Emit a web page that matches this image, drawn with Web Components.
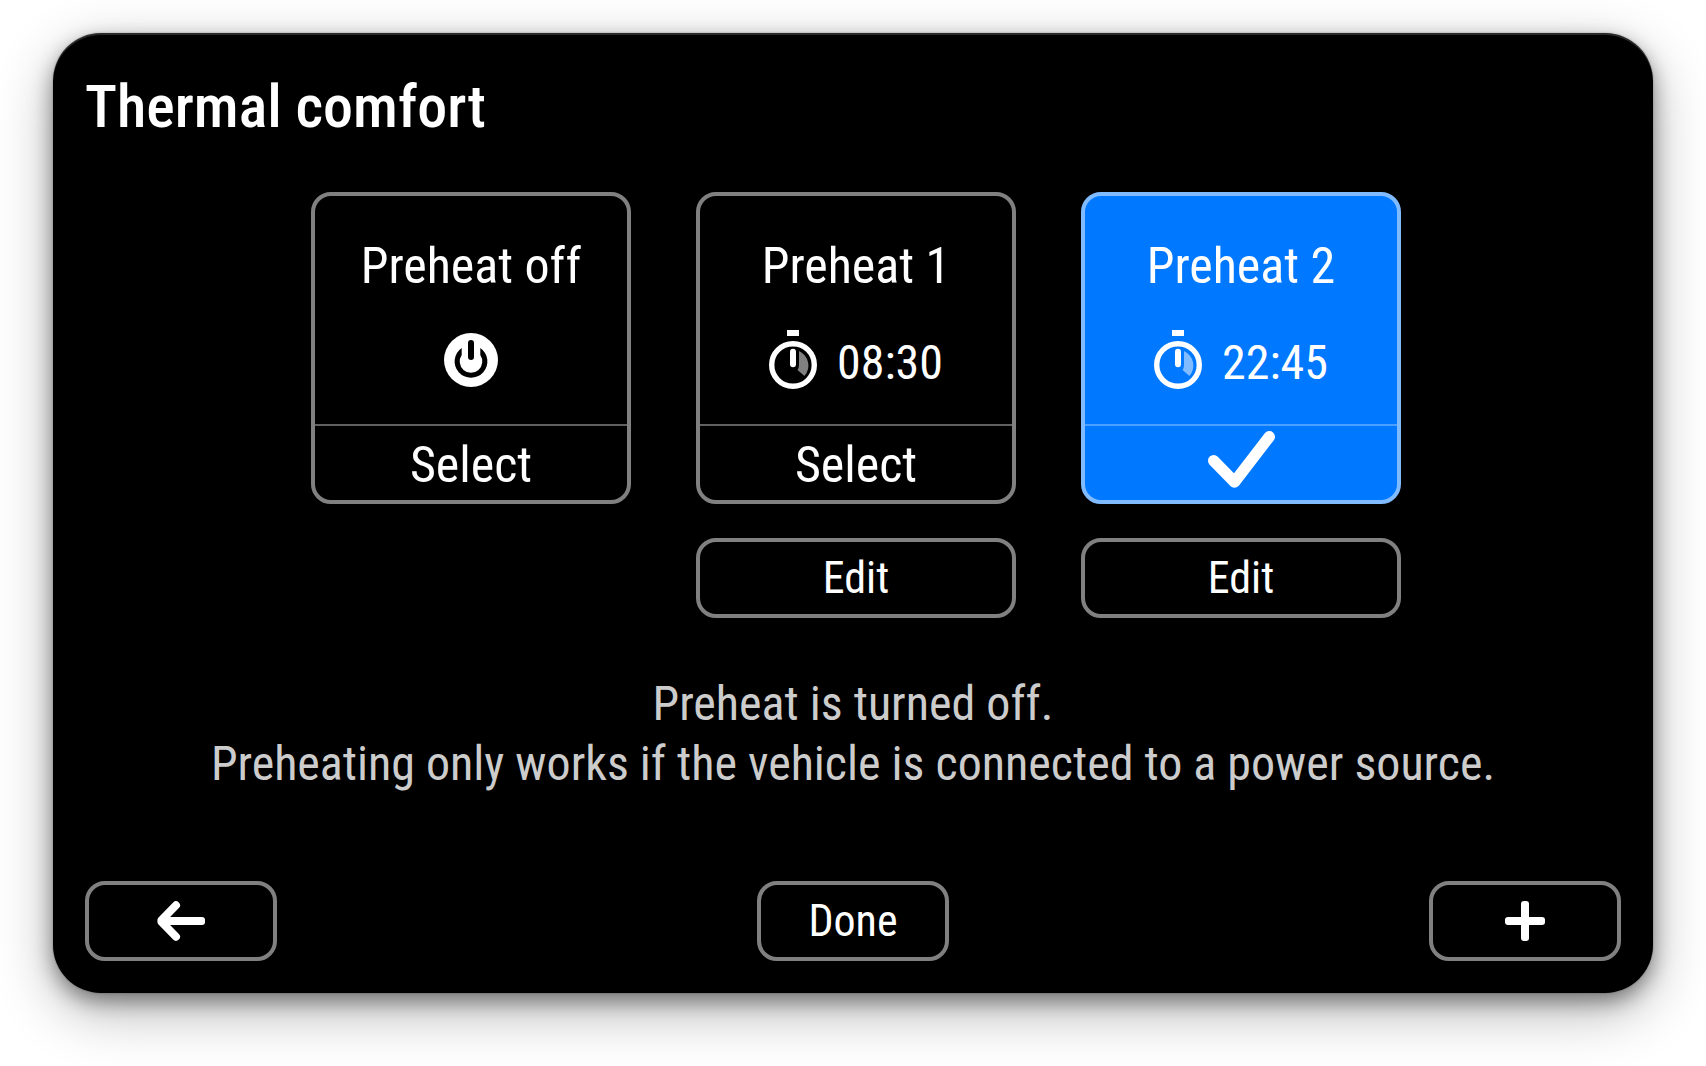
<!DOCTYPE html>
<html lang="en">
<head>
<meta charset="utf-8">
<meta name="viewport" content="width=device-width, initial-scale=1">
<title>Thermal comfort</title>
<style>
  body {
    margin: 0;
    background: #fff;
    font-family: "Roboto Condensed", "Liberation Sans Narrow", "Open Sans", sans-serif;
  }
</style>
</head>
<body>

<thermal-screen>
  <h1 slot="title">Thermal comfort</h1>

  <preheat-option name="Preheat off"></preheat-option>
  <preheat-option name="Preheat 1" time="08:30" editable></preheat-option>
  <preheat-option name="Preheat 2" time="22:45" editable selected></preheat-option>

  <p slot="message">Preheat is turned off.<br>Preheating only works if the vehicle is connected to a power source.</p>

  <panel-button slot="actions" label="Back">
    <svg width="48" height="40" viewBox="0 0 48 40" fill="none" stroke="#fff" stroke-width="8" stroke-linecap="round" stroke-linejoin="round">
      <rect x="6" y="16" width="42" height="8" rx="3" fill="#fff" stroke="none"/>
      <path d="M19 4.3L4.4 19.3V20.7L19 35.7"/>
      <path d="M5 16L12 16V24H5Z" fill="#fff" stroke="none"/>
    </svg>
  </panel-button>
  <panel-button slot="actions">Done</panel-button>
  <panel-button slot="actions" label="Add">
    <svg width="40" height="40" viewBox="0 0 40 40" fill="#fff">
      <rect x="16" width="8" height="40" rx="3"/>
      <rect y="16" width="40" height="8" rx="3"/>
    </svg>
  </panel-button>
</thermal-screen>

<script>
const powerIcon = `
  <svg width="54" height="60" viewBox="0 -3 54 60">
    <circle cx="27" cy="27" r="27" fill="#fff"/>
    <path d="M17.7 14.9A16.4 16.4 0 1 0 36.3 14.9V22A11.3 11.3 0 1 1 17.7 22Z"/>
    <rect x="24" y="7" width="6" height="20" rx="3"/>
  </svg>`;

const timerIcon = `
  <svg width="48" height="60" viewBox="0 0 48 60">
    <rect x="18" width="12" height="6" fill="#fff"/>
    <circle cx="24" cy="35" r="21.3" fill="none" stroke="#fff" stroke-width="5.4"/>
    <path d="M30 21A16 16 0 0 1 35.5 46L28.5 40Q30 38 30 35Z" fill="#fff" opacity=".5"/>
    <rect x="21" y="18.7" width="6" height="18.6" rx="3" fill="#fff"/>
  </svg>`;

const checkIcon = `
  <svg width="68" height="68" viewBox="0 0 68 68" role="img" aria-label="Selected">
    <path d="M6.7 29.7L27.5 51L62.3 5.7" fill="none" stroke="#fff" stroke-width="11.4" stroke-linecap="round" stroke-linejoin="round"/>
  </svg>`;

class PanelButton extends HTMLElement {
  constructor() {
    super();
    this.attachShadow({ mode: "open" });
  }

  connectedCallback() {
    const label = this.getAttribute("label");

    this.shadowRoot.innerHTML = `
    <style>
      :host {
        display: block;
        min-width: 192px;
      }

      button {
        display: flex;
        align-items: center;
        justify-content: center;
        box-sizing: border-box;
        width: 100%;
        height: 80px;
        padding: 0 16px;
        border: 4px solid #808080;
        border-radius: 20px;
        background: #000;
        color: #fff;
        font-family: inherit;
        font-size: 44px;
        line-height: 60px;
        cursor: pointer;
      }
    </style>

    <button type="button" ${label ? `aria-label="${label}"` : ""}><slot></slot></button>
    `;
  }
}

customElements.define("panel-button", PanelButton);

class PreheatOption extends HTMLElement {
  static observedAttributes = ["selected"];

  constructor() {
    super();
    this.attachShadow({ mode: "open" });
    this.shadowRoot.addEventListener("click", (event) => {
      if (event.target.closest(".card")) {
        this.dispatchEvent(new CustomEvent("choose", { bubbles: true }));
      }
    });
  }

  connectedCallback() {
    this.render();
  }

  attributeChangedCallback() {
    if (this.isConnected) this.render();
  }

  render() {
    const time = this.getAttribute("time");
    const selected = this.hasAttribute("selected");

    this.shadowRoot.innerHTML = `
    <style>
      :host {
        display: flex;
        flex-direction: column;
        gap: 34px;
      }

      .card {
        display: flex;
        flex-direction: column;
        padding: 0;
        overflow: hidden;
        border: 4px solid #808080;
        border-radius: 20px;
        background: #000;
        color: #fff;
        font-family: inherit;
        text-align: center;
        cursor: pointer;
      }

      :host([selected]) .card {
        border-color: #80bbff;
        background: #0078ff;
      }

      .card > span {
        width: 100%;
      }

      .name {
        padding-top: 40px;
        font-size: 50px;
        line-height: 60px;
      }

      .info {
        display: flex;
        align-items: flex-end;
        justify-content: center;
        gap: 20px;
        height: 60px;
        padding: 34px 0;
        font-size: 48px;
        line-height: 54px;
      }

      .state {
        display: flex;
        align-items: center;
        justify-content: center;
        height: 70px;
        padding-top: 4px;
        border-top: 2px solid #606060;
        font-size: 50px;
        line-height: 60px;
      }

      :host([selected]) .state {
        border-color: #4ca0ff;
      }
    </style>

    <button class="card" type="button" aria-pressed="${selected}">
      <span class="name">${this.getAttribute("name")}</span>
      <span class="info">${time ? `${timerIcon}<span>${time}</span>` : powerIcon}</span>
      <span class="state">${selected ? checkIcon : "Select"}</span>
    </button>
    ${this.hasAttribute("editable") ? "<panel-button>Edit</panel-button>" : ""}
    `;
  }
}

customElements.define("preheat-option", PreheatOption);

class ThermalScreen extends HTMLElement {
  constructor() {
    super();
    this.attachShadow({ mode: "open" });
  }

  connectedCallback() {
    this.render();
    this.addEventListener("choose", (event) => {
      this.querySelectorAll("preheat-option").forEach((option) => {
        option.toggleAttribute("selected", option === event.target);
      });
    });
  }

  render() {
    this.shadowRoot.innerHTML = `
    <style>
      :host {
        display: flex;
        box-sizing: border-box;
        min-height: 100vh;
        padding: 33px 53px 73px;
      }

      main {
        display: flex;
        flex: 1;
        flex-direction: column;
        padding: 32px;
        border-radius: 48px;
        background: #000;
        color: #fff;
        box-shadow:
          inset 0 2px 0 rgba(255, 255, 255, 0.16),
          0 0 2px rgba(0, 0, 0, 0.3),
          0 8px 20px rgba(0, 0, 0, 0.4),
          0 18px 56px rgba(0, 0, 0, 0.3);
      }

      ::slotted(h1) {
        margin: 0 0 43px;
        font-size: 60px;
        font-weight: 500;
        line-height: 84px;
      }

      .options {
        display: grid;
        grid-template-columns: repeat(3, 320px);
        align-items: start;
        justify-content: center;
        gap: 65px;
        padding-left: 6px;
      }

      ::slotted(p) {
        margin: 56px 0 32px;
        color: #ccc;
        font-size: 48px;
        line-height: 60px;
        text-align: center;
      }

      footer {
        display: flex;
        justify-content: space-between;
        margin-top: auto;
      }
    </style>

    <main>
      <slot name="title"></slot>
      <div class="options"><slot></slot></div>
      <slot name="message"></slot>
      <footer><slot name="actions"></slot></footer>
    </main>
    `;
  }
}

customElements.define("thermal-screen", ThermalScreen);
</script>
</body>
</html>
